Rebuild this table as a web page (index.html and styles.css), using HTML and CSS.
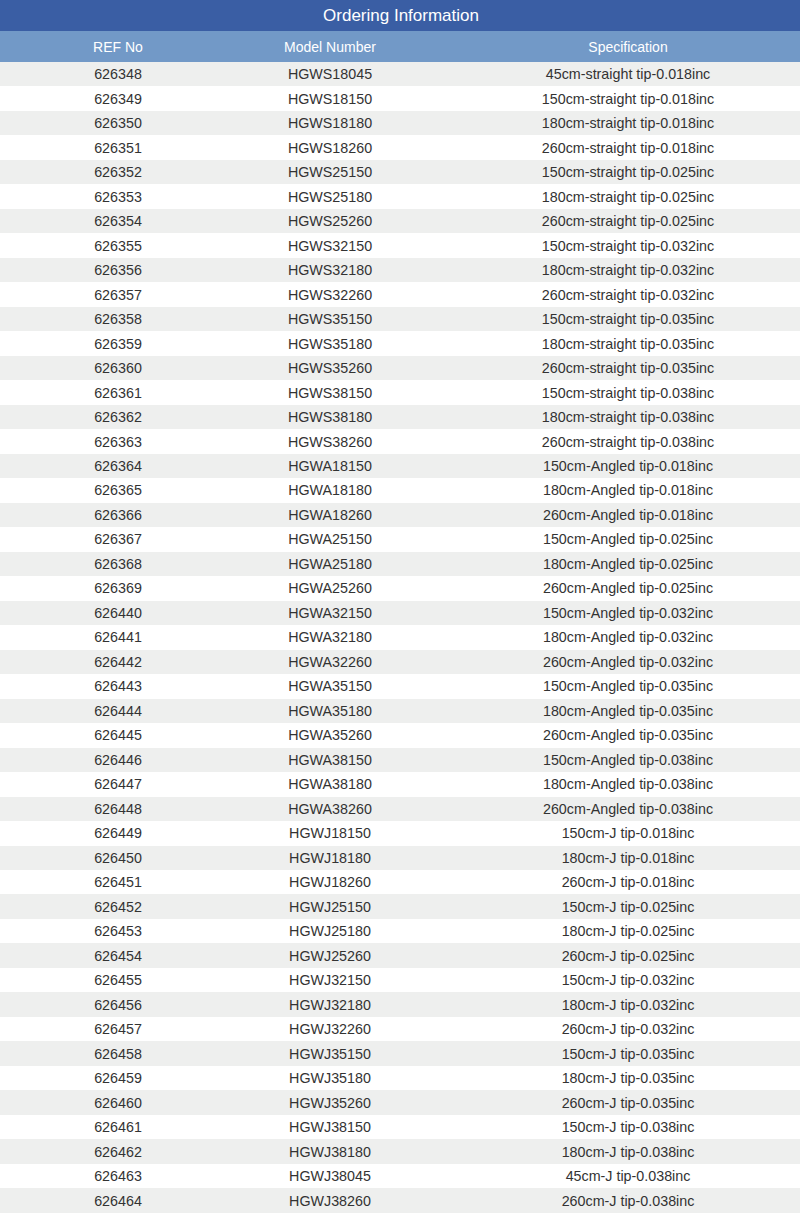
FILE: index.html
```html
<!DOCTYPE html>
<html lang="en">
<head>
    <meta charset="UTF-8">
    <meta name="viewport" content="width=device-width, initial-scale=1.0">
    <title>Ordering Information</title>
    <link rel="stylesheet" href="styles.css">
</head>
<body>
    <table class="order-table">
        <colgroup>
            <col class="col-ref">
            <col class="col-model">
            <col class="col-spec">
        </colgroup>
        <thead>
            <tr class="title-row">
                <th colspan="3">Ordering Information</th>
            </tr>
            <tr class="head-row">
                <th>REF No</th>
                <th>Model Number</th>
                <th class="spec">Specification</th>
            </tr>
        </thead>
        <tbody>
            <tr><td>626348</td><td>HGWS18045</td><td class="spec">45cm-straight tip-0.018inc</td></tr>
            <tr><td>626349</td><td>HGWS18150</td><td class="spec">150cm-straight tip-0.018inc</td></tr>
            <tr><td>626350</td><td>HGWS18180</td><td class="spec">180cm-straight tip-0.018inc</td></tr>
            <tr><td>626351</td><td>HGWS18260</td><td class="spec">260cm-straight tip-0.018inc</td></tr>
            <tr><td>626352</td><td>HGWS25150</td><td class="spec">150cm-straight tip-0.025inc</td></tr>
            <tr><td>626353</td><td>HGWS25180</td><td class="spec">180cm-straight tip-0.025inc</td></tr>
            <tr><td>626354</td><td>HGWS25260</td><td class="spec">260cm-straight tip-0.025inc</td></tr>
            <tr><td>626355</td><td>HGWS32150</td><td class="spec">150cm-straight tip-0.032inc</td></tr>
            <tr><td>626356</td><td>HGWS32180</td><td class="spec">180cm-straight tip-0.032inc</td></tr>
            <tr><td>626357</td><td>HGWS32260</td><td class="spec">260cm-straight tip-0.032inc</td></tr>
            <tr><td>626358</td><td>HGWS35150</td><td class="spec">150cm-straight tip-0.035inc</td></tr>
            <tr><td>626359</td><td>HGWS35180</td><td class="spec">180cm-straight tip-0.035inc</td></tr>
            <tr><td>626360</td><td>HGWS35260</td><td class="spec">260cm-straight tip-0.035inc</td></tr>
            <tr><td>626361</td><td>HGWS38150</td><td class="spec">150cm-straight tip-0.038inc</td></tr>
            <tr><td>626362</td><td>HGWS38180</td><td class="spec">180cm-straight tip-0.038inc</td></tr>
            <tr><td>626363</td><td>HGWS38260</td><td class="spec">260cm-straight tip-0.038inc</td></tr>
            <tr><td>626364</td><td>HGWA18150</td><td class="spec">150cm-Angled tip-0.018inc</td></tr>
            <tr><td>626365</td><td>HGWA18180</td><td class="spec">180cm-Angled tip-0.018inc</td></tr>
            <tr><td>626366</td><td>HGWA18260</td><td class="spec">260cm-Angled tip-0.018inc</td></tr>
            <tr><td>626367</td><td>HGWA25150</td><td class="spec">150cm-Angled tip-0.025inc</td></tr>
            <tr><td>626368</td><td>HGWA25180</td><td class="spec">180cm-Angled tip-0.025inc</td></tr>
            <tr><td>626369</td><td>HGWA25260</td><td class="spec">260cm-Angled tip-0.025inc</td></tr>
            <tr><td>626440</td><td>HGWA32150</td><td class="spec">150cm-Angled tip-0.032inc</td></tr>
            <tr><td>626441</td><td>HGWA32180</td><td class="spec">180cm-Angled tip-0.032inc</td></tr>
            <tr><td>626442</td><td>HGWA32260</td><td class="spec">260cm-Angled tip-0.032inc</td></tr>
            <tr><td>626443</td><td>HGWA35150</td><td class="spec">150cm-Angled tip-0.035inc</td></tr>
            <tr><td>626444</td><td>HGWA35180</td><td class="spec">180cm-Angled tip-0.035inc</td></tr>
            <tr><td>626445</td><td>HGWA35260</td><td class="spec">260cm-Angled tip-0.035inc</td></tr>
            <tr><td>626446</td><td>HGWA38150</td><td class="spec">150cm-Angled tip-0.038inc</td></tr>
            <tr><td>626447</td><td>HGWA38180</td><td class="spec">180cm-Angled tip-0.038inc</td></tr>
            <tr><td>626448</td><td>HGWA38260</td><td class="spec">260cm-Angled tip-0.038inc</td></tr>
            <tr><td>626449</td><td>HGWJ18150</td><td class="spec">150cm-J tip-0.018inc</td></tr>
            <tr><td>626450</td><td>HGWJ18180</td><td class="spec">180cm-J tip-0.018inc</td></tr>
            <tr><td>626451</td><td>HGWJ18260</td><td class="spec">260cm-J tip-0.018inc</td></tr>
            <tr><td>626452</td><td>HGWJ25150</td><td class="spec">150cm-J tip-0.025inc</td></tr>
            <tr><td>626453</td><td>HGWJ25180</td><td class="spec">180cm-J tip-0.025inc</td></tr>
            <tr><td>626454</td><td>HGWJ25260</td><td class="spec">260cm-J tip-0.025inc</td></tr>
            <tr><td>626455</td><td>HGWJ32150</td><td class="spec">150cm-J tip-0.032inc</td></tr>
            <tr><td>626456</td><td>HGWJ32180</td><td class="spec">180cm-J tip-0.032inc</td></tr>
            <tr><td>626457</td><td>HGWJ32260</td><td class="spec">260cm-J tip-0.032inc</td></tr>
            <tr><td>626458</td><td>HGWJ35150</td><td class="spec">150cm-J tip-0.035inc</td></tr>
            <tr><td>626459</td><td>HGWJ35180</td><td class="spec">180cm-J tip-0.035inc</td></tr>
            <tr><td>626460</td><td>HGWJ35260</td><td class="spec">260cm-J tip-0.035inc</td></tr>
            <tr><td>626461</td><td>HGWJ38150</td><td class="spec">150cm-J tip-0.038inc</td></tr>
            <tr><td>626462</td><td>HGWJ38180</td><td class="spec">180cm-J tip-0.038inc</td></tr>
            <tr><td>626463</td><td>HGWJ38045</td><td class="spec">45cm-J tip-0.038inc</td></tr>
            <tr><td>626464</td><td>HGWJ38260</td><td class="spec">260cm-J tip-0.038inc</td></tr>
        </tbody>
    </table>
</body>
</html>
```

FILE: styles.css
```css
body {
    font-family: "Liberation Sans", Arial, Helvetica, sans-serif;
    margin: 0;
    background-color: #ffffff;
}
.order-table {
    width: 800px;
    border-collapse: collapse;
    table-layout: fixed;
}
.col-ref {
    width: 236px;
}
.col-model {
    width: 188px;
}
.col-spec {
    width: 376px;
}
th, td {
    padding: 0;
    text-align: center;
    font-weight: normal;
    white-space: nowrap;
}
.spec {
    padding-left: 32px;
}
.title-row th {
    height: 31px;
    background-color: #3a5ea4;
    color: #ffffff;
    font-size: 17px;
    padding-left: 2px;
}
.head-row th {
    height: 31px;
    background-color: #7299c7;
    color: #ffffff;
    font-size: 14px;
}
.head-row th.spec {
    padding-left: 32px;
}
tbody td {
    height: 24.49px;
    font-size: 14.3px;
    color: #333333;
}
tbody tr:nth-child(odd) {
    background-color: #eeefee;
}
```
